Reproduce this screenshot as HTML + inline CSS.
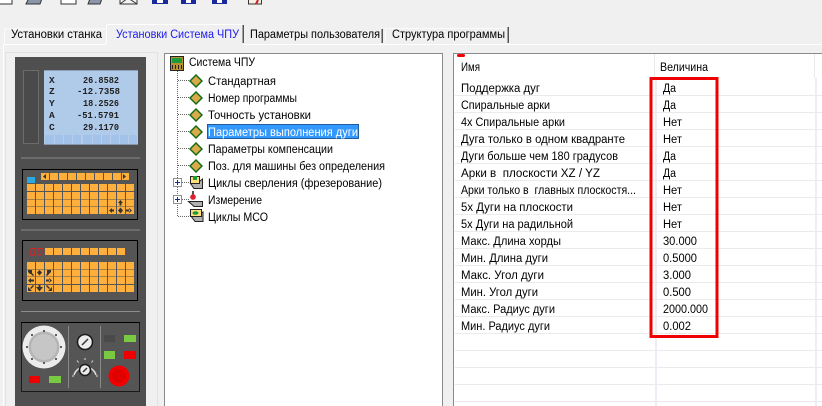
<!DOCTYPE html>
<html><head><meta charset="utf-8"><style>
html,body{margin:0;padding:0;background:#f0f0f0;overflow:hidden}
svg{display:block}
text{font-family:"Liberation Sans",sans-serif;font-size:11.5px;fill:#000;white-space:pre}
text.lcd{font-family:"Liberation Mono",monospace;font-size:9.500px;font-weight:bold;fill:#222}
</style></head><body>
<svg width="822" height="406" viewBox="0 0 822 406" xmlns="http://www.w3.org/2000/svg">
<defs>
<g id="d"><path d="M0-7 7 0 0 7-7 0Z" fill="#0f6a14"/><path d="M0-5 5 0 0 5-5 0Z" fill="#d9a94a"/></g>
</defs>
<rect width="822" height="406" fill="#f0f0f0"/>

<!-- toolbar -->
<g stroke="#333" stroke-width="1">
<rect x="-2" y="-6" width="14" height="10" fill="#fff"/>
<path d="M26 4 30-4H43L40 4Z" fill="#8b97a8"/>
<rect x="61" y="-6" width="15" height="10" fill="#fff"/>
<path d="M88 4 91-4H103L100 4Z" fill="#8b97a8"/>
<path d="M120 4V-4H137V4Z M120 4 128-2 137 4" fill="#f4f4f4"/>
</g>
<g fill="#1a2a9c"><rect x="152" y="-4" width="16" height="8"/><rect x="181" y="-4" width="15" height="8"/><rect x="212" y="-4" width="15" height="8"/></g>
<g fill="#fff"><rect x="157" y="-2" width="6" height="5"/><rect x="186" y="-2" width="5" height="5"/><rect x="217" y="-2" width="5" height="5"/></g>
<rect x="248.500" y="-4" width="13" height="8" fill="#f5efe0" stroke="#333"/><path d="M256 4 258 0" stroke="#c0202a" stroke-width="2"/>

<!-- tabs -->
<rect x="3" y="44" width="819" height="1" fill="#fff"/>
<rect x="3" y="44" width="1" height="362" fill="#fff"/>
<path d="M4.500 43V29H105" fill="none" stroke="#fbfbfb"/>
<rect x="106" y="24" width="137" height="21" fill="#f0f0f0"/>
<path d="M106.500 44V25.500L108 24.500H242" fill="none" stroke="#fff"/>
<rect x="242" y="25" width="1" height="18" fill="#a0a0a0"/><rect x="243" y="25" width="1" height="18" fill="#555"/>
<rect x="381" y="29" width="1" height="14" fill="#a0a0a0"/><rect x="382" y="29" width="1" height="14" fill="#555"/>
<path d="M385.500 43V28.500H507" fill="none" stroke="#fbfbfb"/>
<rect x="507" y="27" width="1" height="16" fill="#a0a0a0"/><rect x="508" y="27" width="1" height="16" fill="#555"/>
<text x="11" y="38" textLength="91" lengthAdjust="spacingAndGlyphs">Установки станка</text>
<text x="116" y="38" textLength="123" lengthAdjust="spacingAndGlyphs" style="fill:#1a1aee">Установки Система ЧПУ</text>
<text x="250" y="38" textLength="130" lengthAdjust="spacingAndGlyphs">Параметры пользователя</text>
<text x="392" y="38" textLength="113" lengthAdjust="spacingAndGlyphs">Структура программы</text>

<!-- machine panel -->
<rect x="5.500" y="52.500" width="152" height="360" fill="#f0f0f0" stroke="#e2e2e2"/>
<rect x="15" y="57" width="131" height="349" fill="#4f4f4f"/>
<rect x="23.500" y="70.500" width="15" height="73" fill="#4a4a4a" stroke="#6c6c6c"/>
<rect x="44" y="70" width="94" height="75" fill="#b0cbea"/>
<rect x="44" y="70" width="94" height="1" fill="#8c9db5"/>
<rect x="45" y="135" width="92" height="9" fill="#a3c2ea"/>
<rect x="44" y="144" width="94" height="1" fill="#8796aa"/>
<g fill="#b7cdea"><rect x="54" y="135" width="1" height="9"/><rect x="63" y="135" width="1" height="9"/><rect x="72" y="135" width="1" height="9"/><rect x="81" y="135" width="2" height="9"/><rect x="92" y="135" width="1" height="9"/><rect x="101" y="135" width="1" height="9"/><rect x="110" y="135" width="1" height="9"/><rect x="119" y="135" width="1" height="9"/><rect x="128" y="135" width="1" height="9"/></g>
<text class="lcd" x="49" y="83">X</text><text class="lcd" x="83" y="83" textLength="36" lengthAdjust="spacingAndGlyphs">26.8582</text>
<text class="lcd" x="49" y="94">Z</text><text class="lcd" x="77" y="94" textLength="43" lengthAdjust="spacingAndGlyphs">-12.7358</text>
<text class="lcd" x="49" y="106">Y</text><text class="lcd" x="83" y="106" textLength="36" lengthAdjust="spacingAndGlyphs">18.2526</text>
<text class="lcd" x="49" y="118">A</text><text class="lcd" x="77" y="118" textLength="42" lengthAdjust="spacingAndGlyphs">-51.5791</text>
<text class="lcd" x="49" y="130">C</text><text class="lcd" x="83" y="130" textLength="36" lengthAdjust="spacingAndGlyphs">29.1170</text>

<rect x="21" y="157" width="119" height="2" fill="#6b6b6b"/>
<rect x="22.500" y="169.500" width="115" height="50" fill="#555" stroke="#000"/>
<g fill="none" stroke="#ffb03c" stroke-dasharray="8 1">
<path d="M41 176.500H129" stroke-width="7"/>
<path d="M27 187.500H134M27 195.500H134M27 203H134M27 210.500H134" stroke-width="7"/>
</g>
<rect x="27" y="177" width="8" height="6" fill="#2aa8e0"/>
<g fill="#333">
<path d="M46 174 43 176.500 46 179Z"/><path d="M123 174 126 176.500 123 179Z"/>
<path d="M120.500 200 118 203H119.500V205.500H121.500V203H123Z"/>
<path d="M109 210.500 112 208V213ZM111 209.500H114V211.500H111Z"/>
<path d="M120.500 207.500 118 210.500 120.500 213.500 123 210.500Z"/>
<path d="M132 210.500 129 208V213ZM126 209.500H130V211.500H126Z"/>
</g>
<rect x="21" y="229" width="119" height="2" fill="#6b6b6b"/>
<rect x="22.500" y="240.500" width="115" height="60" fill="#555" stroke="#000"/>
<path d="M45 251.500H126" fill="none" stroke="#ffb03c" stroke-width="7" stroke-dasharray="8 1"/>
<g fill="none" stroke="#e02020"><rect x="30.500" y="248.500" width="4" height="6.500" transform="skewX(-4) translate(18 0)"/><rect x="37.500" y="248.500" width="4" height="6.500" transform="skewX(-4) translate(18 0)"/></g>
<path d="M27 265.500H134M27 273H134M27 280.500H134M27 288.500H134" fill="none" stroke="#ffb03c" stroke-width="7" stroke-dasharray="8 1"/>
<g fill="#333">
<path d="M28 270H32V274H30L28 272Z M31 272 34 275 33 276 30 273Z"/>
<path d="M39.500 270 37 272.500 39.500 275.500 42 272.500Z"/>
<path d="M51 270H47V274L49 274 51 272Z M48 272 46 275 47 276 50 273Z"/>
<path d="M28 280.500 31 278V283ZM30 279.500H34V281.500H30Z"/>
<path d="M52 280.500 49 278V283ZM46 279.500H50V281.500H46Z"/>
<path d="M28 291V287L30 289 32 291ZM30 288 33 285 34 286 31 289Z"/>
<path d="M36 287H43L39.500 291.500ZM38.500 285H40.500V288H38.500Z"/>
<path d="M52 291V287L48 291ZM46 286 47 285 50 288 49 289Z"/>
</g>
<rect x="21" y="311" width="119" height="1" fill="#8c8c8c"/>
<rect x="21.500" y="322.500" width="118" height="69" fill="#555" stroke="#1a1a1a"/>
<rect x="21" y="322" width="119" height="1" fill="#000"/>
<circle cx="44" cy="347" r="21.500" fill="#ececec"/>
<circle cx="44" cy="347" r="15.500" fill="#b5b5b5"/>
<circle cx="44" cy="347" r="13" fill="#c6c6c6"/>
<g fill="#333"><circle cx="44" cy="331" r="1"/><circle cx="56" cy="335" r="1"/><circle cx="61" cy="347" r="1"/><circle cx="56" cy="359" r="1"/><circle cx="44" cy="363" r="1"/><circle cx="32" cy="359" r="1"/><circle cx="27" cy="347" r="1"/><circle cx="32" cy="335" r="1"/></g>
<rect x="29" y="376" width="11" height="7" fill="#ee0000"/>
<rect x="49" y="376" width="12" height="7" fill="#7ac943"/>
<rect x="68" y="326" width="1" height="62" fill="#8a8a8a"/>
<rect x="100" y="326" width="1" height="62" fill="#8a8a8a"/>
<circle cx="85" cy="342" r="7.500" fill="#ececec" stroke="#1a1a1a" stroke-width="1.500"/>
<path d="M82 345 88 339" stroke="#333" stroke-width="1.500"/>
<path d="M74 375A11.500 11.500 0 0 1 96 375" fill="none" stroke="#ddd" stroke-width="1.500"/>
<path d="M85 358V360M77 360.500 78.500 362.500M93 360.500 91.500 362.500M73 375V377M97 375V377" stroke="#ddd"/>
<circle cx="85" cy="370" r="5.500" fill="#ececec" stroke="#1a1a1a" stroke-width="1.500"/>
<path d="M83 372 87 368" stroke="#333" stroke-width="1.500"/>
<rect x="104" y="335" width="11" height="7" fill="#4a4a4a"/>
<rect x="124" y="335" width="12" height="7" fill="#7ac943"/>
<rect x="104" y="351" width="11" height="8" fill="#7ac943"/>
<rect x="124" y="351" width="12" height="8" fill="#ee0000"/>
<circle cx="119" cy="376" r="10.500" fill="#f00000"/>
<circle cx="119" cy="376" r="7" fill="#e00000"/>

<!-- tree panel -->
<rect x="164.500" y="53.500" width="278" height="360" fill="#fff" stroke="#8a8a8a"/>
<path d="M177.500 71V217M178 80.500H189M178 97.500H189M178 114.500H189M178 131.500H189M178 148.500H189M178 165.500H189M182 182.500H189M182 199.500H189M178 216.500H189" stroke="#666" stroke-dasharray="1 1" fill="none"/>
<rect x="170.500" y="56.500" width="13" height="14" fill="#b8932f" stroke="#222"/>
<rect x="172" y="58" width="10" height="5" fill="#1f9a3a"/>
<path d="M172.500 65V69M175.500 65V69M178.500 65V69M181.500 65V69" stroke="#222"/>
<use href="#d" x="196" y="81"/><use href="#d" x="196" y="98"/><use href="#d" x="196" y="115"/><use href="#d" x="196" y="132"/><use href="#d" x="196" y="149"/><use href="#d" x="196" y="166"/>
<rect x="207" y="124" width="152" height="15" fill="#3399ff"/>
<rect x="207.500" y="124.500" width="151" height="14" fill="none" stroke="#10203a" stroke-dasharray="1 1"/>
<g fill="#fff" stroke="#909090"><rect x="173.500" y="178.500" width="8" height="8"/><rect x="173.500" y="195.500" width="8" height="8"/></g>
<path d="M175 182.500H180M177.500 180V185M175 199.500H180M177.500 197V202" stroke="#1a2a8a"/>
<!-- tree icons -->
<path d="M190.500 183.500H197L202.500 179V188.500H194Z" fill="#b0b0b0" stroke="#222"/>
<rect x="190.500" y="176.500" width="9" height="7" fill="#ffe07a" stroke="#222"/>
<rect x="193" y="176" width="4" height="4" fill="#1a9a3a"/>
<path d="M188.500 201.500H202.500V206.500H194Z" fill="#b0b0b0" stroke="#222"/>
<rect x="192" y="191" width="2" height="5" fill="#555"/>
<circle cx="193" cy="197" r="2.800" fill="#e02030"/>
<path d="M190.500 215.500H197L203 212V221.500H195Z" fill="#b0b0b0" stroke="#222"/>
<rect x="190.500" y="209.500" width="11" height="7" fill="#ffe07a" stroke="#222"/>
<ellipse cx="195.500" cy="213" rx="3" ry="1.800" fill="#1a9a3a"/>
<text x="189" y="66" textLength="66" lengthAdjust="spacingAndGlyphs">Система ЧПУ</text>
<text x="208" y="85" textLength="68" lengthAdjust="spacingAndGlyphs">Стандартная</text>
<text x="208" y="102" textLength="89" lengthAdjust="spacingAndGlyphs">Номер программы</text>
<text x="208" y="119" textLength="103" lengthAdjust="spacingAndGlyphs">Точность установки</text>
<text x="208" y="136" textLength="150" lengthAdjust="spacingAndGlyphs" style="fill:#fff">Параметры выполнения дуги</text>
<text x="208" y="153" textLength="125" lengthAdjust="spacingAndGlyphs">Параметры компенсации</text>
<text x="208" y="170" textLength="177" lengthAdjust="spacingAndGlyphs">Поз. для машины без определения</text>
<text x="208" y="187" textLength="174" lengthAdjust="spacingAndGlyphs">Циклы сверления (фрезерование)</text>
<text x="208" y="204" textLength="54" lengthAdjust="spacingAndGlyphs">Измерение</text>
<text x="208" y="221" textLength="60" lengthAdjust="spacingAndGlyphs">Циклы МСО</text>

<!-- grid -->
<rect x="453" y="53" width="369" height="353" fill="#fff"/>
<rect x="453" y="53" width="369" height="1" fill="#8a8a8a"/>
<rect x="453" y="53" width="1" height="353" fill="#8a8a8a"/>
<rect x="457" y="54" width="8" height="3" rx="1.500" fill="#f00000"/>
<rect x="654" y="54" width="1" height="24" fill="#eaeaea"/><rect x="814" y="54" width="1" height="24" fill="#eaeaea"/>
<g fill="#eceef6"><rect x="655" y="78" width="2" height="328"/><rect x="815" y="78" width="2" height="328"/></g>
<g fill="#ebebeb">
<rect x="455" y="95" width="367" height="1"/><rect x="455" y="112" width="367" height="1"/><rect x="455" y="129" width="367" height="1"/><rect x="455" y="146" width="367" height="1"/><rect x="455" y="163" width="367" height="1"/><rect x="455" y="180" width="367" height="1"/><rect x="455" y="197" width="367" height="1"/><rect x="455" y="214" width="367" height="1"/><rect x="455" y="231" width="367" height="1"/><rect x="455" y="248" width="367" height="1"/><rect x="455" y="265" width="367" height="1"/><rect x="455" y="282" width="367" height="1"/><rect x="455" y="299" width="367" height="1"/><rect x="455" y="316" width="367" height="1"/><rect x="455" y="333" width="367" height="1"/><rect x="455" y="350" width="367" height="1"/><rect x="455" y="367" width="367" height="1"/><rect x="455" y="384" width="367" height="1"/><rect x="455" y="401" width="367" height="1"/>
</g>
<text x="461" y="71" textLength="19" lengthAdjust="spacingAndGlyphs">Имя</text>
<text x="660" y="71" textLength="48" lengthAdjust="spacingAndGlyphs">Величина</text>
<text x="461" y="92" textLength="79" lengthAdjust="spacingAndGlyphs">Поддержка дуг</text>
<text x="461" y="109" textLength="89" lengthAdjust="spacingAndGlyphs">Спиральные арки</text>
<text x="461" y="126" textLength="104" lengthAdjust="spacingAndGlyphs">4х Спиральные арки</text>
<text x="461" y="143" textLength="164" lengthAdjust="spacingAndGlyphs">Дуга только в одном квадранте</text>
<text x="461" y="160" textLength="157" lengthAdjust="spacingAndGlyphs">Дуги больше чем 180 градусов</text>
<text x="461" y="177" textLength="139" lengthAdjust="spacingAndGlyphs">Арки в  плоскости XZ / YZ</text>
<text x="461" y="194" textLength="175" lengthAdjust="spacingAndGlyphs">Арки только в  главных плоскостя...</text>
<text x="461" y="211" textLength="112" lengthAdjust="spacingAndGlyphs">5х Дуги на плоскости</text>
<text x="461" y="228" textLength="112" lengthAdjust="spacingAndGlyphs">5х Дуги на радильной</text>
<text x="461" y="245" textLength="100" lengthAdjust="spacingAndGlyphs">Макс. Длина хорды</text>
<text x="461" y="262" textLength="87" lengthAdjust="spacingAndGlyphs">Мин. Длина дуги</text>
<text x="461" y="279" textLength="83" lengthAdjust="spacingAndGlyphs">Макс. Угол дуги</text>
<text x="461" y="296" textLength="77" lengthAdjust="spacingAndGlyphs">Мин. Угол дуги</text>
<text x="461" y="313" textLength="94" lengthAdjust="spacingAndGlyphs">Макс. Радиус дуги</text>
<text x="461" y="330" textLength="89" lengthAdjust="spacingAndGlyphs">Мин. Радиус дуги</text>
<text x="663" y="92" textLength="13" lengthAdjust="spacingAndGlyphs">Да</text>
<text x="663" y="109" textLength="13" lengthAdjust="spacingAndGlyphs">Да</text>
<text x="663" y="126" textLength="19" lengthAdjust="spacingAndGlyphs">Нет</text>
<text x="663" y="143" textLength="19" lengthAdjust="spacingAndGlyphs">Нет</text>
<text x="663" y="160" textLength="13" lengthAdjust="spacingAndGlyphs">Да</text>
<text x="663" y="177" textLength="13" lengthAdjust="spacingAndGlyphs">Да</text>
<text x="663" y="194" textLength="19" lengthAdjust="spacingAndGlyphs">Нет</text>
<text x="663" y="211" textLength="19" lengthAdjust="spacingAndGlyphs">Нет</text>
<text x="663" y="228" textLength="19" lengthAdjust="spacingAndGlyphs">Нет</text>
<text x="663" y="245" textLength="34" lengthAdjust="spacingAndGlyphs">30.000</text>
<text x="663" y="262" textLength="34" lengthAdjust="spacingAndGlyphs">0.5000</text>
<text x="663" y="279" textLength="28" lengthAdjust="spacingAndGlyphs">3.000</text>
<text x="663" y="296" textLength="28" lengthAdjust="spacingAndGlyphs">0.500</text>
<text x="663" y="313" textLength="45" lengthAdjust="spacingAndGlyphs">2000.000</text>
<text x="663" y="330" textLength="28" lengthAdjust="spacingAndGlyphs">0.002</text>
<rect x="651" y="78.500" width="66" height="258" fill="none" stroke="#f00000" stroke-width="3"/>
</svg>
</body></html>
